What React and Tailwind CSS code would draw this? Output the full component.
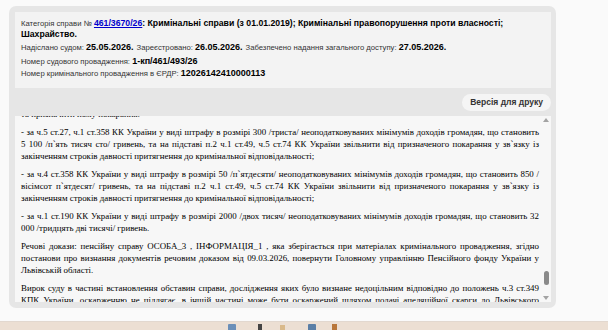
import React from "react";

const sans = { fontFamily: '"Liberation Sans", Arial, sans-serif' };
const serif = { fontFamily: '"Liberation Serif", "Times New Roman", serif' };

function Field({ label, value, className = "" }) {
  return (
    <p className={`h-[12px] text-[9px] leading-[12px] ${className}`}>
      <span className="text-[7.7px] text-[#333]">{label}</span>
      <b className="text-black">{value}</b>
    </p>
  );
}

function Scrollbar() {
  return (
    <div className="flex w-[10px] flex-col items-center justify-between py-[2px]">
      <div className="h-0 w-0 border-x-[3px] border-b-[4px] border-x-transparent border-b-[#a3a3a3]" />
      <div className="flex flex-1 flex-col justify-end pb-[11px]">
        <div className="h-[14px] w-[5px] rounded-full bg-[#8a8a8a]" />
      </div>
      <div className="h-0 w-0 border-x-[3px] border-t-[4px] border-x-transparent border-t-[#a3a3a3]" />
    </div>
  );
}

const paragraphs = [
  "та призначити йому покарання:",
  "- за ч.5 ст.27, ч.1 ст.358 КК України у виді штрафу в розмірі 300 /триста/ неоподатковуваних мінімумів доходів громадян, що становить 5 100 /п`ять тисяч сто/ гривень, та на підставі п.2 ч.1 ст.49, ч.5 ст.74 КК України звільнити від призначеного покарання у зв`язку із закінченням строків давності притягнення до кримінальної відповідальності;",
  "- за ч.4 ст.358 КК України у виді штрафу в розмірі 50 /п`ятдесяти/ неоподатковуваних мінімумів доходів громадян, що становить 850 / вісімсот п`ятдесят/ гривень, та на підставі п.2 ч.1 ст.49, ч.5 ст.74 КК України звільнити від призначеного покарання у зв`язку із закінченням строків давності притягнення до кримінальної відповідальності;",
  "- за ч.1 ст.190 КК України у виді штрафу в розмірі 2000 /двох тисяч/ неоподатковуваних мінімумів доходів громадян, що становить 32 000 /тридцять дві тисячі/ гривень.",
  "Речові докази: пенсійну справу ОСОБА_3 , ІНФОРМАЦІЯ_1 , яка зберігається при матеріалах кримінального провадження, згідно постанови про визнання документів речовим доказом від 09.03.2026, повернути Головному управлінню Пенсійного фонду України у Львівській області.",
  "Вирок суду в частині встановлення обставин справи, дослідження яких було визнане недоцільним відповідно до положень ч.3 ст.349 КПК України, оскарженню не підлягає, в іншій частині може бути оскаржений шляхом подачі апеляційної скарги до Львівського апеляційного суду протягом тридцяти днів з дня його проголошення.",
];

export default function App() {
  return (
    <div className="flex h-[330px] w-[608px] flex-col overflow-hidden bg-[#fafafa]">
      <div className="flex-1 pl-[9px] pt-[6px]">
        <div className="flex h-[302px] w-[547px] flex-col rounded-[7px] bg-[#e6e6e6] pl-[6px] pr-[5px] pt-[6px] pb-[6px]">
          <div className="h-[76px] bg-[#f3f3f3] px-[6px] pt-[6px]" style={sans}>
            <p className="text-[8.7px] leading-[11px] text-black">
              <span className="text-[7.7px] text-[#333]">Категорія справи № </span>
              <a className="font-bold text-[#0000cc] underline">461/3670/26</a>
              <b>
                : Кримінальні справи (з 01.01.2019); Кримінальні правопорушення
                проти власності; Шахрайство.
              </b>
            </p>
            <div className="mt-[1px] flex flex-wrap gap-x-[3px]">
              <Field label="Надіслано судом: " value="25.05.2026." />
              <Field label="Зареєстровано: " value="26.05.2026." />
              <Field label="Забезпечено надання загального доступу: " value="27.05.2026." />
            </div>
            <Field className="mt-[2px]" label="Номер судового провадження: " value="1-кп/461/493/26" />
            <Field label="Номер кримінального провадження в ЄРДР: " value="12026142410000113" />
          </div>
          <div className="flex h-[28px] items-center justify-end">
            <button
              className="h-[17px] rounded-full bg-[#f5f5f5] px-[8px] text-[8.5px] font-bold text-[#333]"
              style={sans}
            >
              Версія для друку
            </button>
          </div>
          <div className="flex flex-1 overflow-hidden bg-[#f7f7f7]">
            <div className="flex-1 overflow-hidden pl-[6px] pr-[2px]">
              <div className="-mt-[8px] text-[8.9px] leading-[12px] text-black" style={serif}>
                {paragraphs.map((t, i) => (
                  <p key={i} className="mb-[6px] text-justify">
                    {t}
                  </p>
                ))}
              </div>
            </div>
            <Scrollbar />
          </div>
        </div>
      </div>
      <div className="relative h-[9px] border-t border-[#e2d8cf] bg-[#ecdfd3]">
        <div className="absolute left-[228px] top-[2px] h-[8px] w-[8px] rounded-[1px] bg-[#6b8fb8]" />
        <div className="absolute left-[258px] top-[2px] h-[8px] w-[4px] bg-[#444]" />
        <div className="absolute left-[280px] top-[3px] h-[8px] w-[5px] bg-[#d9b98a]" />
        <div className="absolute left-[308px] top-[2px] h-[8px] w-[8px] rounded-[1px] bg-[#5b7fa6]" />
        <div className="absolute left-[332px] top-[2px] h-[8px] w-[5px] bg-[#b8763a]" />
      </div>
    </div>
  );
}
